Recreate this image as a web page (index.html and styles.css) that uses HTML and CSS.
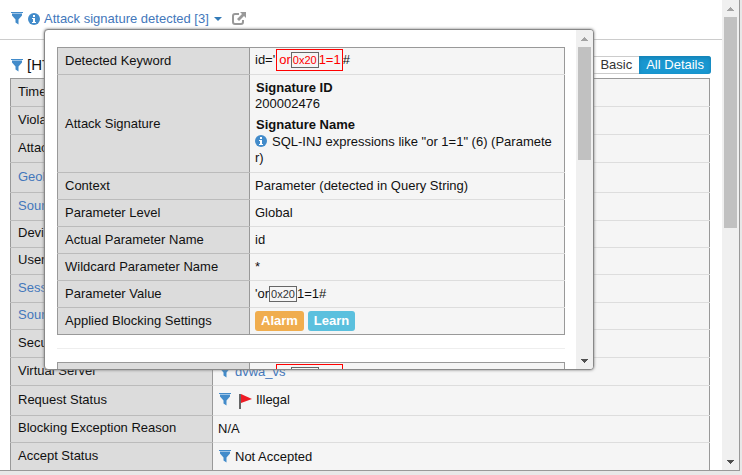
FILE: index.html
```html
<!DOCTYPE html>
<html lang="en">
<head>
<meta charset="utf-8">
<title>Request details</title>
<link rel="stylesheet" href="styles.css">
</head>
<body>
<svg class="defs" aria-hidden="true">
  <symbol id="filter" viewBox="0 0 12 13"><path fill="#9cc3e6" d="M1 1h10v1H1z"/><path fill="#428bca" d="M0 0h12v1H0zM1 2h10v1.5L7.5 7.5V12.5l-3-2V7.5L1 3.5z"/></symbol>
  <symbol id="info" viewBox="0 0 12 12"><circle cx="6" cy="6" r="6" fill="#428bca"/><path fill="#fff" d="M5 2h2v2H5zM4 5h3v4h1v1H4V9h1V6H4z"/></symbol>
  <symbol id="flag" viewBox="0 0 14 16"><path fill="#666" d="M1 1h2v15H1z"/><path fill="#ee1c25" d="M3 1l11 5-11 4z"/></symbol>
  <symbol id="up" viewBox="0 0 7 4"><path d="M3 0h1v1h1v1h1v1h1v1H0V3h1V2h1V1h1z"/></symbol>
  <symbol id="down" viewBox="0 0 7 4"><path d="M0 0h7v1H6v1H5v1H4v1H3V3H2V2H1V1H0z"/></symbol>
</svg>
<div class="frame">
  <main class="page">
    <header class="topbar">
      <svg class="filter"><use href="#filter"/></svg>
      <svg class="info"><use href="#info"/></svg>
      <a class="violation" href="#details">Attack signature detected [3]<span class="caret"></span></a>
      <svg class="external" viewBox="0 0 14 13"><path fill="none" stroke="#999" stroke-width="2" d="M7 2H3Q1 2 1 4v6q0 2 2 2h6q2 0 2-2V8"/><path fill="#999" d="M8 0h6v6l-2-2-5 5-2-2 5-5z"/></svg>
    </header>
    <section class="request">
      <div class="heading">
        <svg class="filter"><use href="#filter"/></svg>
        <h1>[HTTP]</h1>
        <div class="views"><button type="button">Basic</button><button type="button" class="active">All Details</button></div>
      </div>
      <table class="grid outer">
        <tr><th scope="row">Time</th><td></td></tr>
        <tr><th scope="row">Violations</th><td></td></tr>
        <tr><th scope="row">Attack Types</th><td></td></tr>
        <tr class="tall"><th scope="row"><a href="#geo">Geolocation</a></th><td></td></tr>
        <tr><th scope="row"><a href="#ip">Source IP</a></th><td></td></tr>
        <tr class="short"><th scope="row">Device ID</th><td></td></tr>
        <tr class="short"><th scope="row">Username</th><td></td></tr>
        <tr><th scope="row"><a href="#session">Session ID</a></th><td></td></tr>
        <tr class="short"><th scope="row"><a href="#source">Source</a></th><td></td></tr>
        <tr><th scope="row">Security Policy</th><td></td></tr>
        <tr><th scope="row">Virtual Server</th><td><svg class="filter"><use href="#filter"/></svg><a href="#vs">dvwa_vs</a></td></tr>
        <tr class="tall"><th scope="row">Request Status</th><td><svg class="filter"><use href="#filter"/></svg><svg class="flag"><use href="#flag"/></svg>Illegal</td></tr>
        <tr class="short"><th scope="row">Blocking Exception Reason</th><td>N/A</td></tr>
        <tr><th scope="row">Accept Status</th><td><svg class="filter"><use href="#filter"/></svg>Not Accepted</td></tr>
      </table>
    </section>
  </main>
  <div class="scrollbar" aria-hidden="true"><svg class="arrow up"><use href="#up"/></svg><div class="track"><div class="thumb page-thumb"></div></div><svg class="arrow"><use href="#down"/></svg></div>
</div>

<aside class="popup" id="details">
  <div class="popup-body">
    <table class="grid inner">
      <tr><th scope="row">Detected Keyword</th><td class="keyword">id='<span class="match">or<span class="hex">0x20</span>1=1</span>#</td></tr>
      <tr><th scope="row">Attack Signature</th><td class="signature">
        <dl>
          <dt>Signature ID</dt><dd>200002476</dd>
          <dt>Signature Name</dt><dd class="name"><svg class="info"><use href="#info"/></svg>SQL-INJ expressions like "or 1=1" (6) (Parameter)</dd>
        </dl></td></tr>
      <tr><th scope="row">Context</th><td>Parameter (detected in Query String)</td></tr>
      <tr><th scope="row">Parameter Level</th><td>Global</td></tr>
      <tr><th scope="row">Actual Parameter Name</th><td>id</td></tr>
      <tr><th scope="row">Wildcard Parameter Name</th><td>*</td></tr>
      <tr><th scope="row">Parameter Value</th><td>'or<span class="hex">0x20</span>1=1#</td></tr>
      <tr><th scope="row">Applied Blocking Settings</th><td><span class="badge alarm">Alarm</span><span class="badge learn">Learn</span></td></tr>
    </table>
    <hr>
    <table class="grid inner">
      <tr><th scope="row">Detected Keyword</th><td class="keyword">id='<span class="match">or<span class="hex">0x20</span>1=1</span>#</td></tr>
    </table>
  </div>
  <div class="scrollbar" aria-hidden="true"><svg class="arrow up"><use href="#up"/></svg><div class="track"><div class="thumb popup-thumb"></div></div><svg class="arrow"><use href="#down"/></svg></div>
</aside>
</body>
</html>
```
FILE: styles.css
```css
* { box-sizing: border-box; }
body {
  margin: 0;
  height: 100vh;
  padding: 0 2px 4px 0;
  overflow: hidden;
  background: #e8e8e8;
  color: #111;
  font: 13px/16px "Liberation Sans", Arial, sans-serif;
}
a { color: #4377bb; text-decoration: none; }
.defs { position: absolute; width: 0; height: 0; }
.filter { width: 12px; height: 13px; flex: none; }
.info { width: 12px; height: 12px; flex: none; }
.flag { width: 14px; height: 16px; }

.frame {
  display: flex;
  height: 100%;
  overflow: hidden;
  background: #fff;
  border: solid #999;
  border-width: 0 1px 1px 0;
}
.page { flex: 1; min-width: 0; overflow: hidden; padding-bottom: 1px; }
.topbar {
  display: flex;
  align-items: center;
  gap: 4px;
  height: 40px;
  padding: 0 11px 2px;
  border-bottom: 1px solid #ccc;
}
.topbar .filter { margin-right: 1px; }
.violation { display: flex; align-items: center; gap: 5px; }
.caret { border: solid transparent; border-width: 4px 4px 0; border-top-color: #337ab7; }
.external { width: 14px; height: 13px; margin-left: 6px; }

.request { padding: 16px 12px 0 10px; }
.heading { display: flex; align-items: center; gap: 4px; height: 18px; margin: 0 -1px 4px 1px; }
.heading h1 { flex: 1; margin: 0; font-size: 15px; font-weight: normal; }
.views { display: flex; height: 18px; }
.views button {
  padding: 0 7px;
  border: solid #ccc;
  border-width: 1px 0;
  background: #fff;
  color: #333;
  font: inherit;
}
.views .active {
  border: 0;
  border-radius: 0 3px 3px 0;
  background: #1997d1;
  box-shadow: inset 0 2px 4px #1480b3;
  color: #fff;
}

.grid { width: 100%; border-collapse: collapse; table-layout: fixed; background: #f5f5f5; border: 1px solid #999; }
.grid th, .grid td { height: 27px; padding: 0 5px; border-bottom: 1px solid #ddd; text-align: left; font-weight: normal; }
.grid th { width: 192px; padding: 0 7px; background: #dcdcdc; border-right: 1px solid #999; border-bottom-color: #bbb; }
.grid tr:last-child > * { border-bottom-color: #999; }
.grid.outer th { width: 202px; }
.grid.outer th, .grid.outer td { height: 28px; }
.grid.outer th { padding-bottom: 2px; }
.grid.outer .short > * { height: 27px; }
.grid.outer .tall > * { height: 30px; }
.outer td svg { margin-right: 4px; vertical-align: -2px; }
.outer td .filter { margin-left: 1px; }
.outer td .flag { margin-left: 3px; vertical-align: -5px; }

.popup {
  position: absolute;
  top: 29px;
  left: 44px;
  width: 550px;
  height: 341px;
  display: flex;
  overflow: hidden;
  background: #fff;
  border: 1px solid #888;
  border-radius: 4px;
  box-shadow: 0 0 3px #777;
}
.popup-body { flex: 1; min-width: 0; overflow: hidden; padding: 17px 11px 0 12px; }
.popup hr { margin: 13px 0; border: 0; border-top: 1px solid #eee; }
.match { display: inline-block; height: 22px; margin-left: 1px; padding: 2px 1px 2px 2px; border: 1px solid #f00; color: #f00; }
.hex { display: inline-block; padding: 0 1px; border: 1px solid #666; color: #333; font-size: 11px; line-height: 14px; }
.match .hex { color: #f00; }
.grid .keyword { padding-bottom: 2px; }
.inner .signature { height: 98px; padding: 0 8px 1px 5px; }
dl, dd { margin: 0; }
dt { padding-left: 1px; font-weight: bold; }
dd + dt { margin-top: 5px; }
.name { padding-top: 1px; word-break: break-all; }
.name .info { margin-right: 5px; vertical-align: -1px; }
.badge { display: inline-block; margin-right: 4px; padding: 2px 6px; border-radius: 3px; color: #fff; font-weight: bold; }
.alarm { background: #f0ad4e; }
.learn { background: #5bc0de; }

.scrollbar { display: flex; flex: none; flex-direction: column; align-items: center; width: 17px; background: #f0f0f0; }
.track { flex: 1; width: 13px; }
.thumb { background: #c1c1c1; }
.page-thumb { height: 211px; }
.popup-thumb { height: 113px; }
.arrow { width: 7px; height: 4px; margin: 6px 0; fill: #505050; }
.arrow.up { margin: 7px 0 6px; fill: #a3a3a3; }
```
